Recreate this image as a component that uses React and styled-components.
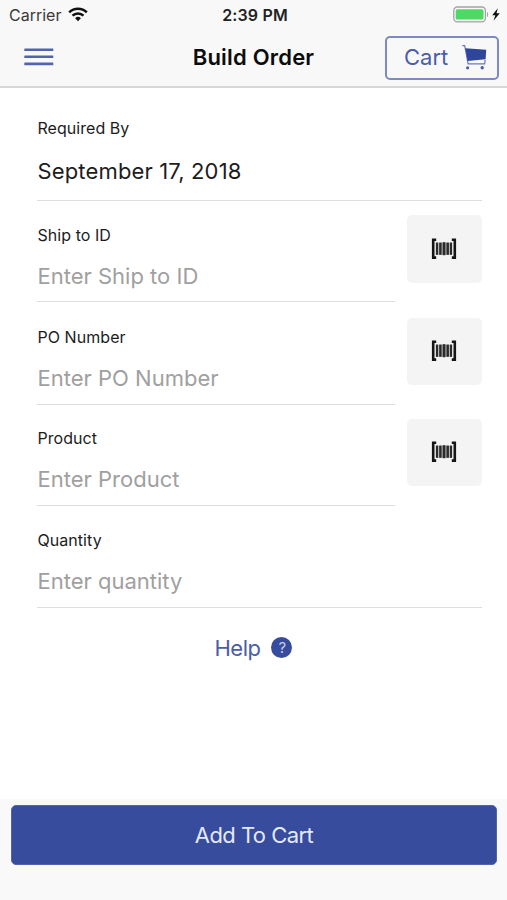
import React from 'react'
import styled, { createGlobalStyle } from 'styled-components'

const GlobalStyle = createGlobalStyle`
    :root {
        --color-primary: #374c9c;
        --color-bar: #f8f8f8;
        --color-line: #dedede;
        --color-placeholder: #a0a0a0;
    }

    * {
        box-sizing: border-box;
    }

    body {
        margin: 0;
        background-color: #fff;
        font-family: Inter, 'Liberation Sans', sans-serif;
        color: #1c1c1c;
    }

    button, input {
        font-family: inherit;
    }
`

const Screen = styled.div`
    display: flex;
    flex-direction: column;
    height: 900px;
    overflow: hidden;
`

const Header = styled.header`
    flex: 0 0 88px;
    margin-bottom: -1px;
    background-color: var(--color-bar);
    border-bottom: 2px solid #d6d6d6;
`

const StatusBar = styled.div`
    display: grid;
    grid-template-columns: 1fr auto 1fr;
    align-items: center;
    height: 29px;
    padding: 0 6px 0 9px;
`

const Carrier = styled.div`
    display: flex;
    align-items: center;
    gap: 7px;
    font-size: 16px;
    color: #3a3a3a;
`

const Clock = styled.div`
    font-size: 16px;
    font-weight: 600;
    letter-spacing: 0.15px;
    color: #222;
`

const Battery = styled.div`
    display: flex;
    justify-content: flex-end;
`

const NavBar = styled.div`
    display: grid;
    grid-template-columns: 114px 1fr 114px;
    align-items: center;
    height: 57px;
    padding: 0 8px;
`

const MenuButton = styled.button`
    display: flex;
    padding: 0 0 2px 16px;
    border: 0;
    background: none;
`

const Title = styled.h1`
    margin: 0;
    padding-bottom: 2px;
    font-size: 22px;
    font-weight: 600;
    letter-spacing: 0.2px;
    text-align: center;
    color: #0c0c0c;
`

const CartButton = styled.button`
    display: flex;
    align-items: center;
    justify-content: space-between;
    height: 44px;
    padding: 0 10px 1px 17px;
    border: 2px solid #7c8bc4;
    border-radius: 5px;
    background: none;
    font-size: 22px;
    color: #4a5da8;
`

const Form = styled.main`
    flex: 1;
    padding: 0 25px 0 37px;
`

const Row = styled.div`
    display: flex;
    gap: 12px;
    height: ${({ $height }) => $height}px;
`

const Field = styled.label`
    display: flex;
    flex: 1;
    flex-direction: column;
    justify-content: flex-end;
    min-width: 0;
    padding: 0 0 ${({ $bottom }) => $bottom}px 0.5px;
    border-bottom: 1px solid var(--color-line);
`

const FieldName = styled.span`
    font-size: 16px;
    line-height: 20px;
    letter-spacing: 0.05px;
`

const Input = styled.input`
    width: 100%;
    height: 28px;
    margin-top: ${({ $top }) => $top}px;
    padding: 0;
    border: 0;
    outline: 0;
    background: none;
    font-size: 22px;
    letter-spacing: ${({ $spacing }) => $spacing || 0}px;
    color: #1c1c1c;

    &::placeholder {
        color: var(--color-placeholder);
        opacity: 1;
    }
`

const ScanButton = styled.button`
    display: flex;
    align-items: center;
    justify-content: center;
    flex: 0 0 75px;
    height: ${({ $height }) => $height}px;
    margin-top: ${({ $top }) => $top}px;
    padding: 0 2px 2px 0;
    border: 0;
    border-radius: 5px;
    background-color: #f4f4f4;
`

const HelpLink = styled.button`
    display: flex;
    align-items: center;
    gap: 11px;
    height: 30px;
    margin: 25px auto 0;
    padding: 0 12px 0 0;
    border: 0;
    background: none;
    font-size: 22px;
    letter-spacing: -0.5px;
    color: #4a5da8;
`

const HelpBadge = styled.span`
    display: flex;
    align-items: center;
    justify-content: center;
    width: 21px;
    height: 21px;
    margin-top: -2px;
    border-radius: 50%;
    background-color: var(--color-primary);
    font-size: 15px;
    color: #c4ccec;
`

const Footer = styled.footer`
    flex: 0 0 101px;
    padding: 6px 10px 0 11px;
    background-color: #f9f9f9;
`

const AddButton = styled.button`
    width: 100%;
    height: 60px;
    padding: 0;
    border: 1px solid #5265ab;
    border-radius: 5px;
    background-color: var(--color-primary);
    font-size: 22px;
    letter-spacing: -0.55px;
    color: #e4e9fa;
`

const fields = [
    { name: 'Required By', value: 'September 17, 2018', height: 114, top: 19, bottom: 15, spacing: 0.15 },
    { name: 'Ship to ID', placeholder: 'Enter Ship to ID', height: 101, top: 17, bottom: 11, scan: { top: 14, height: 68 } },
    { name: 'PO Number', placeholder: 'Enter PO Number', height: 103, top: 17, bottom: 12, scan: { top: 16, height: 67 } },
    { name: 'Product', placeholder: 'Enter Product', height: 101, top: 17, bottom: 12, scan: { top: 14, height: 67 } },
    { name: 'Quantity', placeholder: 'Enter quantity', height: 102, top: 17, bottom: 12 },
]

function WifiIcon() {
    return (
        <svg width="20" height="15" viewBox="0 0 20 15" fill="none" stroke="#111" strokeWidth="2.5">
            <path d="M1.2 5.3a12.6 12.6 0 0 1 17.6 0" />
            <path d="M4.5 8.7a7.9 7.9 0 0 1 11 0" />
            <path d="M10 14.2l-2.9-3a4.2 4.2 0 0 1 5.8 0z" fill="#111" stroke="none" />
        </svg>
    )
}

function BatteryIcon() {
    return (
        <svg width="48" height="17" viewBox="0 0 48 17">
            <rect x="0.8" y="1" width="31.6" height="14.8" rx="3.5" fill="#f8f8f8" stroke="#a3a3a3" strokeWidth="1.3" />
            <rect x="2.7" y="3.2" width="27.8" height="10.4" rx="1.5" fill="#4cd964" />
            <path d="M34 6c1.5.3 1.5 4.7 0 5z" fill="#a3a3a3" />
            <path d="M44.8 2.2l-5.6 7h3.1l-1.8 5.6 6.3-7.5h-3.3z" fill="#111" />
        </svg>
    )
}

function MenuIcon() {
    return (
        <svg width="30" height="18" viewBox="0 0 30 18" fill="#5064ad">
            <rect x="0.3" y="0.4" width="29" height="2.6" rx="0.5" />
            <rect x="0.3" y="7.5" width="29" height="2.6" rx="0.5" />
            <rect x="0.3" y="14.6" width="29" height="2.6" rx="0.5" />
        </svg>
    )
}

function CartIcon() {
    return (
        <svg width="25" height="26" viewBox="0 0 25 26">
            <path d="M0.3 1.6h2.4l3.4 18.2h16.5l.6-4" fill="none" stroke="#6778b9" strokeWidth="1.2" />
            <path d="M3.4 4.2l20.8 1.6-.6 9.4L5.6 17z" fill="#2f459b" />
            <circle cx="5.6" cy="23.8" r="1.6" fill="#4a5eaa" />
            <circle cx="20.2" cy="23.8" r="1.7" fill="#4a5eaa" />
        </svg>
    )
}

function BarcodeIcon() {
    return (
        <svg width="26" height="21" viewBox="0 0 26 21">
            <path d="M5.2 1.8H2.2v17.8h3M20.8 1.8h3v17.8h-3" fill="none" stroke="#151515" strokeWidth="2.6" />
            <rect x="4.6" y="4.6" width="16.8" height="12.2" fill="#b5b5b5" />
            <g fill="#2a2a2a">
                <rect x="5" y="4.6" width="2" height="12.2" />
                <rect x="8.2" y="4.6" width="2.4" height="12.2" />
                <rect x="11.7" y="4.2" width="2.7" height="13" />
                <rect x="15.5" y="4.6" width="2.4" height="12.2" />
                <rect x="19" y="4.6" width="2" height="12.2" />
            </g>
        </svg>
    )
}

export default function App() {
    return (
        <>
            <GlobalStyle />
            <Screen>
                <Header>
                    <StatusBar>
                        <Carrier>
                            Carrier
                            <WifiIcon />
                        </Carrier>
                        <Clock>2:39 PM</Clock>
                        <Battery>
                            <BatteryIcon />
                        </Battery>
                    </StatusBar>
                    <NavBar>
                        <MenuButton aria-label="Menu">
                            <MenuIcon />
                        </MenuButton>
                        <Title>Build Order</Title>
                        <CartButton>
                            Cart
                            <CartIcon />
                        </CartButton>
                    </NavBar>
                </Header>
                <Form>
                    {fields.map(el => (
                        <Row key={el.name} $height={el.height}>
                            <Field $bottom={el.bottom}>
                                <FieldName>{el.name}</FieldName>
                                <Input
                                    $top={el.top}
                                    $spacing={el.spacing}
                                    defaultValue={el.value}
                                    placeholder={el.placeholder}
                                />
                            </Field>
                            {el.scan && (
                                <ScanButton
                                    $top={el.scan.top}
                                    $height={el.scan.height}
                                    aria-label={`Scan ${el.name}`}
                                >
                                    <BarcodeIcon />
                                </ScanButton>
                            )}
                        </Row>
                    ))}
                    <HelpLink>
                        Help
                        <HelpBadge>?</HelpBadge>
                    </HelpLink>
                </Form>
                <Footer>
                    <AddButton>Add To Cart</AddButton>
                </Footer>
            </Screen>
        </>
    )
}
